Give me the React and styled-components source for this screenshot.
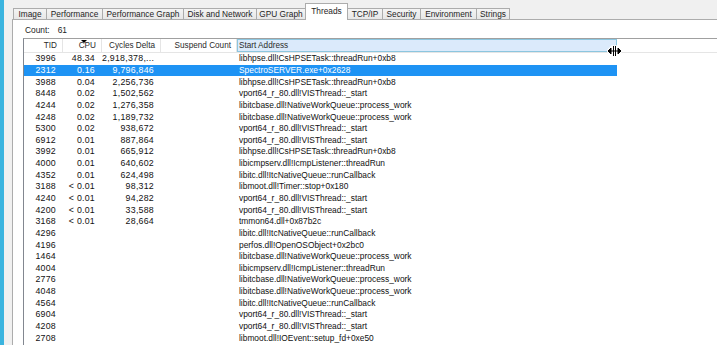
import React from 'react';
import styled, { createGlobalStyle } from 'styled-components';

const GlobalStyle = createGlobalStyle`
  html, body {
    margin: 0;
    height: 100%;
  }
  body {
    background: #f0f0f0;
    font-family: 'Liberation Sans', Arial, sans-serif;
    overflow: hidden;
  }
`;

const Screen = styled.div`
  position: relative;
  display: flex;
  width: 717px;
  height: 345px;
  overflow: hidden;
`;

const Edge = styled.div`
  flex: none;
  width: 4px;
  background: #3bb4df;
`;

const Window = styled.div`
  flex: 1;
  min-width: 0;
  display: flex;
  flex-direction: column;
  padding: 3px 0 0 8px;
`;

const TabBar = styled.div`
  position: relative;
  z-index: 1;
  display: flex;
  align-items: flex-end;
  height: 17px;
  padding-left: 1px;
  margin-bottom: -1px;
`;

const Tab = styled.div`
  box-sizing: border-box;
  position: relative;
  z-index: ${p => (p.$active ? 1 : 0)};
  width: ${p => p.$w}px;
  height: ${p => (p.$active ? 17 : 11)}px;
  margin-left: -1px;
  margin-bottom: ${p => (p.$active ? 0 : 1)}px;
  border: 1px solid #acacac;
  border-bottom: none;
  background: ${p => (p.$active ? '#fff' : 'linear-gradient(#f4f4f4, #e7e7e7)')};
  color: #1e1e1e;
  font-size: 8.3px;
  line-height: ${p => (p.$active ? 14 : 10)}px;
  text-align: center;
  white-space: nowrap;
  &:first-child {
    margin-left: 0;
  }
`;

const Panel = styled.div`
  flex: 1;
  display: flex;
  flex-direction: column;
  background: #fff;
  border-top: 1px solid #acacac;
  border-left: 1px solid #acacac;
`;

const CountRow = styled.div`
  display: flex;
  align-items: center;
  gap: 8px;
  height: 18px;
  padding: 2px 0 0 12px;
  box-sizing: border-box;
  font-size: 8.4px;
  color: #1e1e1e;
`;

const ListView = styled.div`
  flex: 1;
  margin-left: 10px;
  border-top: 1px solid #a0a0a0;
  border-left: 1px solid #828790;
`;

const Header = styled.div`
  display: flex;
  height: 14px;
  box-sizing: border-box;
  border-bottom: 1px solid #e5e5e5;
`;

const HeadCell = styled.div`
  position: relative;
  box-sizing: border-box;
  flex: none;
  width: ${p => p.$w}px;
  padding: ${p => (p.$hover ? '0 0 0 1px' : '0 5px 0 0')};
  border-right: 1px solid #e5e5e5;
  background: ${p => (p.$hover ? '#dbeafb' : 'transparent')};
  border: ${p => (p.$hover ? '1px solid #8cc6df' : undefined)};
  color: #2a2a2a;
  font-size: 8.2px;
  line-height: ${p => (p.$hover ? 11 : 13)}px;
  text-align: ${p => (p.$hover ? 'left' : 'right')};
  white-space: nowrap;
`;

const SortArrow = styled.span`
  position: absolute;
  top: 1px;
  left: 18px;
  width: 0;
  height: 0;
  border-left: 3px solid transparent;
  border-right: 3px solid transparent;
  border-top: 3px solid #000;
`;

const Filler = styled.div`
  flex: 1;
`;

const Row = styled.div`
  display: grid;
  grid-template-columns: 39px 39px 59px 76px 380px;
  width: fit-content;
  height: 11.65px;
  align-items: center;
  background: ${p => (p.$selected ? '#1e93f4' : 'transparent')};
  color: ${p => (p.$selected ? '#fff' : '#111')};
`;

const Num = styled.div`
  padding-right: 7px;
  font-size: 8.8px;
  letter-spacing: 0.25px;
  line-height: 11px;
  text-align: right;
  white-space: nowrap;
`;

const Addr = styled.div`
  grid-column: 5;
  padding-left: 2px;
  font-size: 8.4px;
  line-height: 11px;
  white-space: nowrap;
`;

const Cursor = styled.svg`
  position: absolute;
  left: 607px;
  top: 45px;
`;

const tabs = [
  ['Image', 34],
  ['Performance', 57],
  ['Performance Graph', 82],
  ['Disk and Network', 74],
  ['GPU Graph', 50],
  ['Threads', 43],
  ['TCP/IP', 36],
  ['Security', 39],
  ['Environment', 57],
  ['Strings', 34],
];

const columns = [
  ['TID', 39],
  ['CPU', 39],
  ['Cycles Delta', 59],
  ['Suspend Count', 76],
];

const threads = [
  ['3996', '48.34', '2,918,378,...', 'libhpse.dll!CsHPSETask::threadRun+0xb8'],
  ['2312', '0.16', '9,796,846', 'SpectroSERVER.exe+0x2628'],
  ['3988', '0.04', '2,256,736', 'libhpse.dll!CsHPSETask::threadRun+0xb8'],
  ['8448', '0.02', '1,502,562', 'vport64_r_80.dll!VISThread::_start'],
  ['4244', '0.02', '1,276,358', 'libitcbase.dll!NativeWorkQueue::process_work'],
  ['4248', '0.02', '1,189,732', 'libitcbase.dll!NativeWorkQueue::process_work'],
  ['5300', '0.02', '938,672', 'vport64_r_80.dll!VISThread::_start'],
  ['6912', '0.01', '887,864', 'vport64_r_80.dll!VISThread::_start'],
  ['3992', '0.01', '665,912', 'libhpse.dll!CsHPSETask::threadRun+0xb8'],
  ['4000', '0.01', '640,602', 'libicmpserv.dll!IcmpListener::threadRun'],
  ['4352', '0.01', '624,498', 'libitc.dll!ItcNativeQueue::runCallback'],
  ['3188', '< 0.01', '98,312', 'libmoot.dll!Timer::stop+0x180'],
  ['4240', '< 0.01', '94,282', 'vport64_r_80.dll!VISThread::_start'],
  ['4200', '< 0.01', '33,588', 'vport64_r_80.dll!VISThread::_start'],
  ['3168', '< 0.01', '28,664', 'tmmon64.dll+0x87b2c'],
  ['4296', '', '', 'libitc.dll!ItcNativeQueue::runCallback'],
  ['4196', '', '', 'perfos.dll!OpenOSObject+0x2bc0'],
  ['1464', '', '', 'libitcbase.dll!NativeWorkQueue::process_work'],
  ['4004', '', '', 'libicmpserv.dll!IcmpListener::threadRun'],
  ['2776', '', '', 'libitcbase.dll!NativeWorkQueue::process_work'],
  ['4048', '', '', 'libitcbase.dll!NativeWorkQueue::process_work'],
  ['4564', '', '', 'libitc.dll!ItcNativeQueue::runCallback'],
  ['6904', '', '', 'vport64_r_80.dll!VISThread::_start'],
  ['4208', '', '', 'vport64_r_80.dll!VISThread::_start'],
  ['2708', '', '', 'libmoot.dll!IOEvent::setup_fd+0xe50'],
];

const App = () => (
  <>
    <GlobalStyle />
    <Screen>
      <Edge />
      <Window>
        <TabBar>
          {tabs.map(([label, w]) => (
            <Tab key={label} $w={w} $active={label === 'Threads'}>
              {label}
            </Tab>
          ))}
        </TabBar>
        <Panel>
          <CountRow>
            <span>Count:</span>
            <span>61</span>
          </CountRow>
          <ListView>
            <Header>
              {columns.map(([label, w]) => (
                <HeadCell key={label} $w={w}>
                  {label === 'CPU' && <SortArrow />}
                  {label}
                </HeadCell>
              ))}
              <HeadCell $w={380} $hover>
                Start Address
              </HeadCell>
              <Filler />
            </Header>
            {threads.map(([tid, cpu, cycles, addr], i) => (
              <Row key={tid + i} $selected={tid === '2312'}>
                <Num>{tid}</Num>
                <Num>{cpu}</Num>
                <Num>{cycles}</Num>
                <Addr>{addr}</Addr>
              </Row>
            ))}
          </ListView>
        </Panel>
      </Window>
      {/* column-resize mouse pointer */}
      <Cursor width="15" height="12" viewBox="0 0 15 12">
        <g stroke="#fff" strokeWidth="3" fill="#fff">
          <path d="M6.5 0.5v11M8.5 0.5v11M1.5 6h12" />
          <path d="M1 6l3-3v6zM14 6l-3-3v6z" />
        </g>
        <g stroke="#000" strokeWidth="1" fill="#000">
          <path d="M6.5 1v10M8.5 1v10M2 6h11" />
          <path d="M1 6l3-3v6zM14 6l-3-3v6z" />
        </g>
      </Cursor>
    </Screen>
  </>
);

export default App;
